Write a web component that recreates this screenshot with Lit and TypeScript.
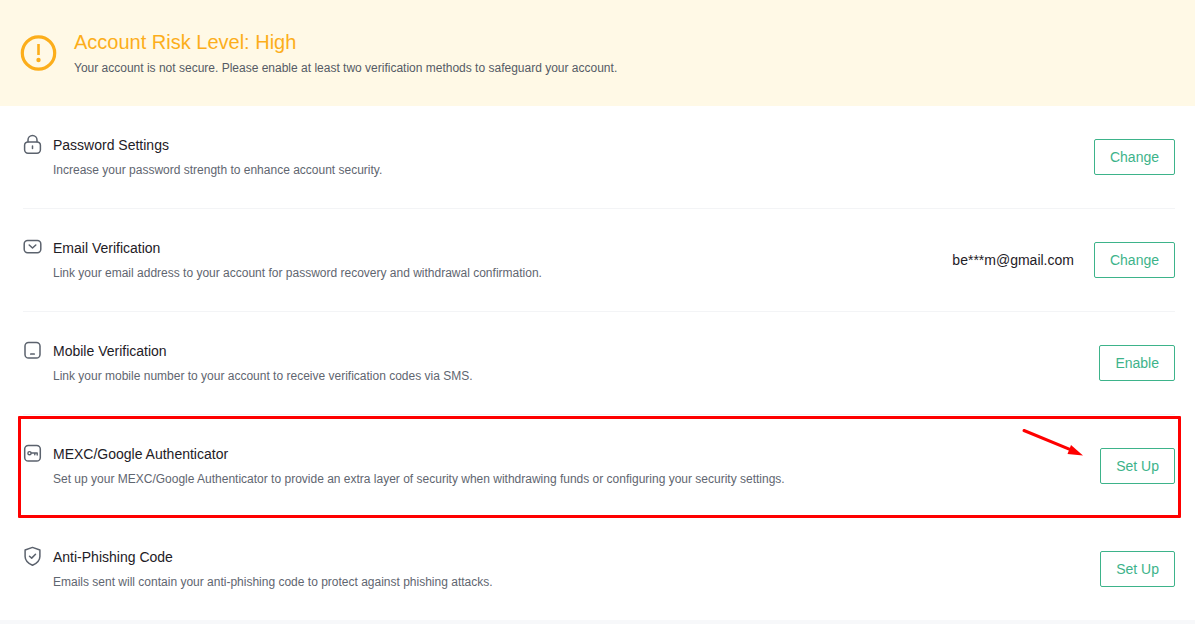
import { LitElement, html, svg, css, nothing } from "lit";
import { customElement } from "lit/decorators.js";

interface Setting {
  icon: unknown;
  title: string;
  text: string;
  action: string;
  value?: string;
  marked?: boolean;
}

const lock = svg`<path d="M6 7.800V6a4.500 4.500 0 0 1 9 0v1.800"/><rect x="2.600" y="7.900" width="15.800" height="11.300" rx="3.400"/><path d="M10.500 12v2.600"/>`;
const mail = svg`<rect x="2.200" y="3.500" width="16.600" height="12.200" rx="3.400"/><path d="M7.200 8l3.300 3 3.300-3"/>`;
const phone = svg`<rect x="3" y="2.500" width="15" height="15.600" rx="3.600"/><path d="M8.800 14h3.400" stroke-width="1.700"/>`;
const key = svg`<rect x="2.700" y="2.500" width="15.600" height="15.600" rx="3.600"/><circle cx="7.500" cy="10.200" r="1.600" stroke-width="1.400"/><path d="M9.300 10h5.900v2M12.800 10v1.700" stroke-width="1.400"/>`;
const shield = svg`<path d="M10.500 1.400l7.400 2.600v6.400c0 4.200-3.200 6.900-7.400 8.900-4.200-2-7.400-4.700-7.400-8.900V4z"/><path d="M7.500 10.200l2.200 1.900 3.800-3.800"/>`;

const settings: Setting[] = [
  { icon: lock, title: "Password Settings", text: "Increase your password strength to enhance account security.", action: "Change" },
  { icon: mail, title: "Email Verification", text: "Link your email address to your account for password recovery and withdrawal confirmation.", action: "Change", value: "be***m@gmail.com" },
  { icon: phone, title: "Mobile Verification", text: "Link your mobile number to your account to receive verification codes via SMS.", action: "Enable" },
  { icon: key, title: "MEXC/Google Authenticator", text: "Set up your MEXC/Google Authenticator to provide an extra layer of security when withdrawing funds or configuring your security settings.", action: "Set Up", marked: true },
  { icon: shield, title: "Anti-Phishing Code", text: "Emails sent will contain your anti-phishing code to protect against phishing attacks.", action: "Set Up" },
];

@customElement("app-root")
export class AppRoot extends LitElement {
  static styles = css`
    :host {
      display: flex;
      flex-direction: column;
      min-height: 100vh;
      background: #f7f8fa;
      font-family: "Liberation Sans", Arial, sans-serif;
      color: #1e2026;
    }
    h1, h2, p, ul { margin: 0; padding: 0; font-weight: 400; }
    .banner {
      display: flex;
      align-items: center;
      gap: 16px;
      padding: 28px 20px 26px;
      background: #fff9e6;
    }
    .alert { width: 38px; height: 38px; flex: none; }
    .banner h1 { font-size: 20px; line-height: 28px; color: #fcae1b; }
    .banner p { font-size: 12px; line-height: 24px; color: #555b65; }
    .list { list-style: none; background: #fff; padding: 0 20px 0 23px; }
    .row {
      position: relative;
      display: flex;
      align-items: center;
      gap: 20px;
      padding: 25px 0;
      border-bottom: 1px solid #f3f4f6;
    }
    .row:last-child { border-bottom: 0; }
    .info {
      flex: 1;
      display: grid;
      grid-template-columns: 20px 1fr;
      column-gap: 10px;
      align-items: start;
      padding-top: 2px;
    }
    .icon {
      width: 21px;
      height: 22px;
      fill: none;
      stroke: #5b626d;
      stroke-width: 1.5;
      stroke-linecap: round;
      stroke-linejoin: round;
    }
    .info h2 { font-size: 14px; line-height: 25px; }
    .info p { grid-column: 2; font-size: 12px; line-height: 25px; color: #5f6670; }
    .value { font-size: 14px; }
    button {
      height: 36px;
      padding: 0 15px;
      border: 1px solid #3db38a;
      border-radius: 2px;
      background: #fff;
      color: #3db38a;
      font: 14px "Liberation Sans", Arial, sans-serif;
      cursor: pointer;
    }
    .frame {
      position: absolute;
      inset: 1px -6px -1px -5px;
      border: 3px solid #fe0000;
      border-radius: 1px;
      pointer-events: none;
    }
    .arrow { position: absolute; right: 90px; top: 12px; width: 64px; height: 32px; pointer-events: none; }
  `;

  private row(s: Setting) {
    return html`<li class="row">
      <div class="info">
        <svg class="icon" viewBox="1 -1 21 22" aria-hidden="true">${s.icon}</svg>
        <h2>${s.title}</h2>
        <p>${s.text}</p>
      </div>
      ${s.value ? html`<span class="value">${s.value}</span>` : nothing}
      <button type="button" aria-label="${s.action}: ${s.title}">${s.action}</button>
      ${s.marked
        ? html`<div class="frame"></div>
            <svg class="arrow" viewBox="0 0 64 32" aria-hidden="true">
              <path d="M3 3.500L50 22.800" stroke="#fe0000" stroke-width="3" stroke-linecap="round" />
              <path d="M50 18L62 28.500L46.500 27Z" fill="#fe0000" />
            </svg>`
        : nothing}
    </li>`;
  }

  render() {
    return html`
      <header class="banner">
        <svg class="alert" viewBox="0 1 38 38" aria-hidden="true">
          <circle cx="18.500" cy="19" r="16.200" fill="none" stroke="#fcae1b" stroke-width="3.200" />
          <path d="M18.500 10v11" stroke="#fcae1b" stroke-width="2.600" />
          <circle cx="18.500" cy="26" r="2.200" fill="#fcae1b" />
        </svg>
        <div>
          <h1>Account Risk Level: High</h1>
          <p>Your account is not secure. Please enable at least two verification methods to safeguard your account.</p>
        </div>
      </header>
      <ul class="list">${settings.map((s) => this.row(s))}</ul>
    `;
  }
}
